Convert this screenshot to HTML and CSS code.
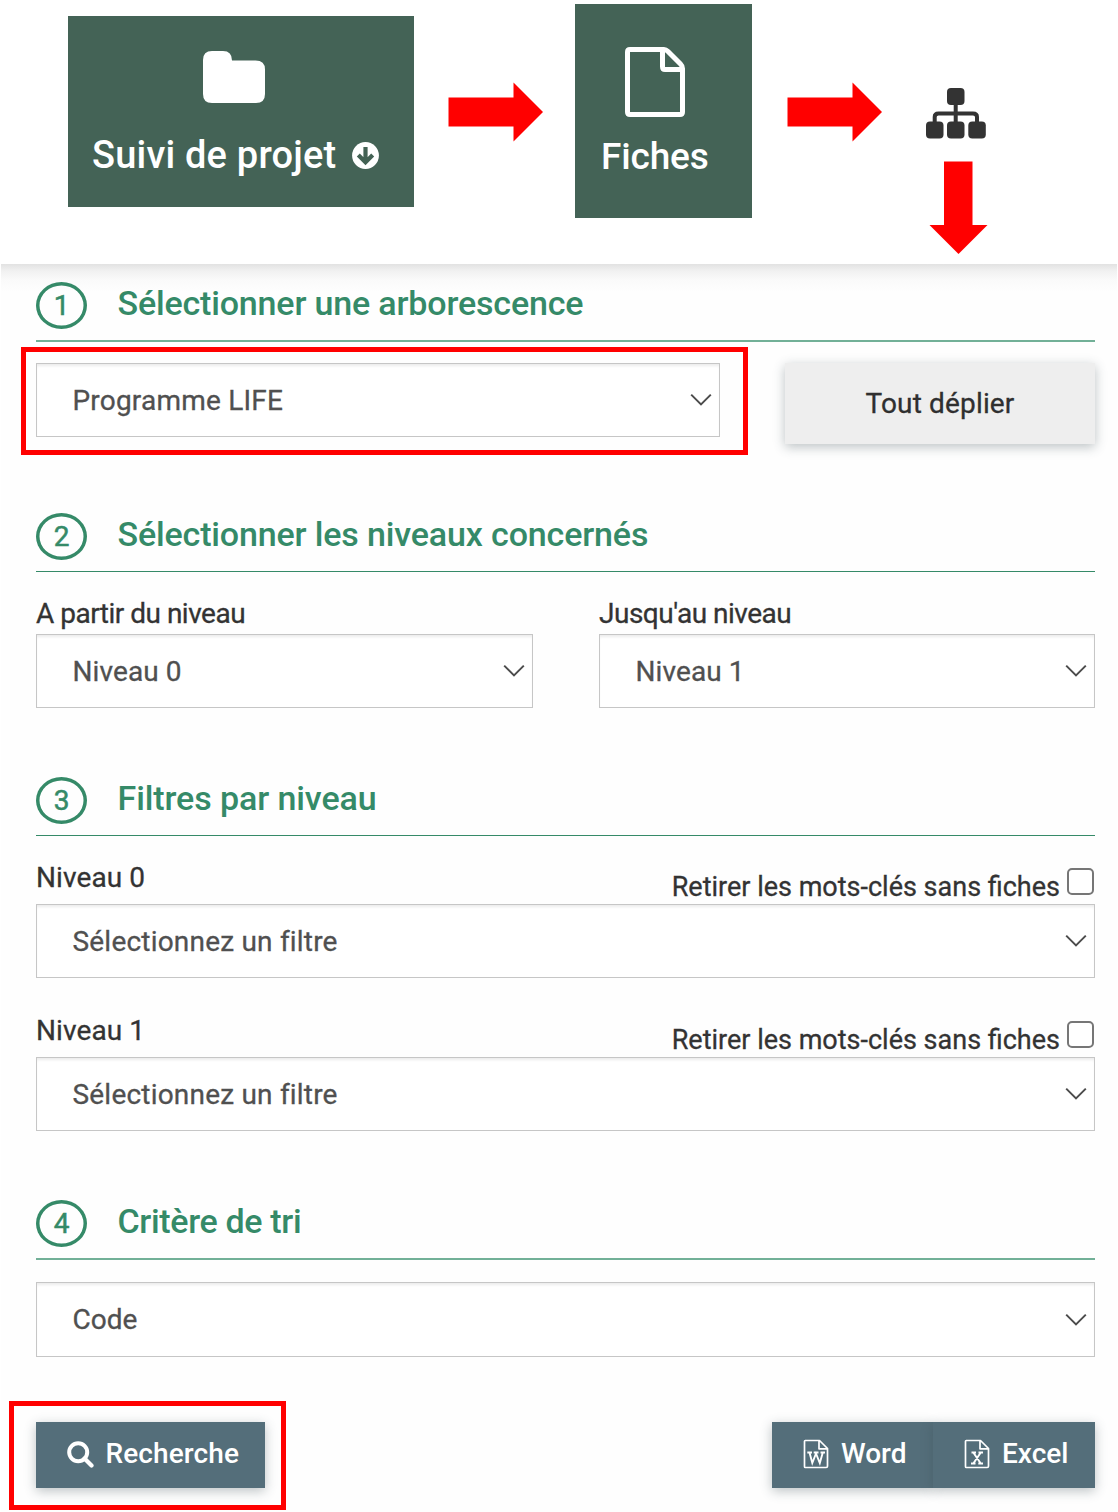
FILE: index.html
```
<!DOCTYPE html>
<html lang="fr">
<head>
<meta charset="utf-8">
<title>Suivi de projet – Fiches</title>
<link rel="stylesheet" href="styles.css">
</head>
<body>
<svg width="0" height="0" class="defs" aria-hidden="true">
  <symbol id="chevron" viewBox="0 0 22 14"><path d="M1.2 1.6 11 11.4 20.8 1.6" fill="none" stroke="#4c4c4c" stroke-width="2"/></symbol>
  <symbol id="arrow" viewBox="0 0 94 60"><path d="M0 15.500H65V0.500L94.500 30 65 59.500V44.500H0Z" fill="#f00"/></symbol>
  <symbol id="sheet" viewBox="0 0 26 30"><path d="M2 1.500H16.500L24.500 9.500V27.200Q24.500 28.500 23.200 28.500H2.200Q1.500 28.500 1.500 27.500V2.300Q1.500 1.500 2.300 1.500M16 1.500V9.800H24.500" fill="none" stroke="#fff" stroke-width="1.700" stroke-linejoin="round"/></symbol>
</svg>

<header class="path">
  <a class="tile tile-project">
    <svg class="folder" viewBox="0 0 62 52"><path d="M9 0H20Q29 0 29 9.500H52.500Q62 9.500 62 18.500V43Q62 52 53 52H9Q0 52 0 43V9Q0 0 9 0Z" fill="#fff"/></svg>
    <span class="tile-label"><span class="t-project">Suivi de projet</span>
      <svg class="down" viewBox="0 0 27 27"><circle cx="13.500" cy="13.500" r="13.400" fill="#fff"/><path d="M13.500 5V20M6.300 13 13.500 20.200 20.700 13" fill="none" stroke="#436254" stroke-width="4.200"/></svg>
    </span>
  </a>
  <svg class="arrow arrow-1"><use href="#arrow"/></svg>
  <a class="tile tile-sheets">
    <svg class="file" viewBox="0 0 60 70"><path d="M5 2.500H39Q41 2.500 43 4.500L55.500 17Q57.500 19 57.500 21.500V65Q57.500 67.500 55 67.500H5Q2.500 67.500 2.500 65V5Q2.500 2.500 5 2.500ZM37.500 3V19.500Q37.500 22.500 40 22.500H57" fill="none" stroke="#fff" stroke-width="5"/></svg>
    <span class="tile-label t-sheets">Fiches</span>
  </a>
  <svg class="arrow arrow-2"><use href="#arrow"/></svg>
  <div class="tree">
    <svg class="sitemap" viewBox="0 0 60 51"><g fill="#333"><rect x="21" y="0" width="17.500" height="17" rx="4"/><rect x="0" y="33.500" width="17.500" height="17" rx="4"/><rect x="21" y="33.500" width="17.500" height="17" rx="4"/><rect x="42.300" y="33.500" width="17.500" height="17" rx="4"/></g><path d="M29.700 15V36M8.700 36V29Q8.700 25.500 12.500 25.500H47Q51 25.500 51 29V36" fill="none" stroke="#333" stroke-width="4"/></svg>
    <svg class="arrow-down" viewBox="0 0 59 92"><path d="M15 0H43.500V63.500H58.500L29.500 92.500 0.500 63.500H15Z" fill="#f00"/></svg>
  </div>
</header>

<main class="panel">
  <section class="step step-1">
    <h2 class="head"><span class="num">1</span><span class="title t-h1">Sélectionner une arborescence</span></h2>
    <div class="row">
      <div class="select marked"><span class="t-life">Programme LIFE</span><svg class="chev"><use href="#chevron"/></svg></div>
      <button class="unfold"><span class="t-unfold">Tout déplier</span></button>
    </div>
  </section>

  <section class="step step-2">
    <h2 class="head thin"><span class="num">2</span><span class="title t-h2">Sélectionner les niveaux concernés</span></h2>
    <div class="cols">
      <div class="field"><label class="label"><span class="t-from">A partir du niveau</span></label>
        <div class="select"><span class="t-niv">Niveau 0</span><svg class="chev"><use href="#chevron"/></svg></div></div>
      <div class="field"><label class="label"><span class="t-to">Jusqu'au niveau</span></label>
        <div class="select"><span class="t-niv">Niveau 1</span><svg class="chev"><use href="#chevron"/></svg></div></div>
    </div>
  </section>

  <section class="step step-3">
    <h2 class="head thin"><span class="num">3</span><span class="title t-h3">Filtres par niveau</span></h2>
    <div class="filter">
      <div class="filter-head"><span class="t-niv">Niveau 0</span><label class="remove"><span class="t-remove">Retirer les mots-clés sans fiches</span><i class="box"></i></label></div>
      <div class="select"><span class="t-filter">Sélectionnez un filtre</span><svg class="chev"><use href="#chevron"/></svg></div>
    </div>
    <div class="filter">
      <div class="filter-head"><span class="t-niv">Niveau 1</span><label class="remove"><span class="t-remove">Retirer les mots-clés sans fiches</span><i class="box"></i></label></div>
      <div class="select"><span class="t-filter">Sélectionnez un filtre</span><svg class="chev"><use href="#chevron"/></svg></div>
    </div>
  </section>

  <section class="step step-4">
    <h2 class="head"><span class="num">4</span><span class="title t-h4">Critère de tri</span></h2>
    <div class="select select-sort"><span class="t-code">Code</span><svg class="chev"><use href="#chevron"/></svg></div>
  </section>

  <footer class="actions">
    <button class="btn search"><svg class="lens" viewBox="0 0 27 27"><circle cx="11.200" cy="11.200" r="9" fill="none" stroke="#fff" stroke-width="4"/><path d="M17.500 17.500 24.500 24.500" stroke="#fff" stroke-width="4.200" stroke-linecap="round"/></svg><span class="t-search">Recherche</span></button>
    <div class="exports">
      <button class="btn word"><svg class="doc" viewBox="0 0 26 30"><use href="#sheet"/><path d="M4.300 13.500H9M10.700 13.500H15.500M17.500 13.500H22M6.500 13.500 9.300 24 13 14.500 16.800 24 19.800 13.500" fill="none" stroke="#fff" stroke-width="1.900"/></svg><span class="t-word">Word</span></button>
      <button class="btn excel"><svg class="doc" viewBox="0 0 26 30"><use href="#sheet"/><path d="M7.500 13.500H12M14.500 13.500H19M7 24.500H11.500M14.300 24.500H19M9.300 13.500 16.800 24.500M16.800 13.500 9.300 24.500" fill="none" stroke="#fff" stroke-width="1.900"/></svg><span class="t-excel">Excel</span></button>
    </div>
  </footer>
</main>
</body>
</html>
```
FILE: styles.css
```
* { box-sizing: border-box; }
body { margin: 0; background: #fff; color: #333; font-family: Roboto, "Liberation Sans", sans-serif; font-size: 28px; line-height: 34px; }
span { white-space: nowrap; }
svg { display: block; flex: none; }
.defs { position: absolute; }

.path { display: flex; align-items: flex-start; height: 264px; padding-left: 67.5px; }
.tile { display: flex; flex-direction: column; align-items: center; background: #446356; color: #fff; font-weight: 500; font-size: 38px; line-height: 46px; }
.tile-project { width: 346px; height: 191px; margin-top: 16px; padding-top: 35px; }
.tile-sheets { width: 177px; height: 214px; margin: 4px 0 0 32px; padding-top: 43px; }
.tile-label { display: flex; align-items: center; }
.tile-project .tile-label { width: 346px; padding-left: 24.5px; margin-top: 29px; gap: 16px; }
.t-project { letter-spacing: 0.2px; }
.t-sheets { margin-top: 17px; width: 177px; padding-left: 26px; font-size: 37px; letter-spacing: -0.15px; }
.folder { width: 62px; height: 52px; margin-left: -13px; }
.down { width: 27px; height: 27px; }
.file { width: 60px; height: 70px; margin-left: -18px; }
.arrow { width: 95px; height: 60px; margin-top: 82px; }
.arrow-1 { margin-left: 34.5px; }
.arrow-2 { margin-left: 34.5px; }
.tree { display: flex; flex-direction: column; width: 63px; margin: 88px 0 0 44px; }
.sitemap { width: 60px; height: 51px; }
.arrow-down { width: 59px; height: 93px; margin: 22px 0 0 3px; }

.panel { margin: 0 1px; padding: 18px 22px 0 35px; height: 1248px; background: linear-gradient(#e2e2e2, #f1f1f1 7px, #fafafa 16px, #fefefe 28px); }
.head { display: flex; align-items: flex-start; height: 60px; margin: 0; border-bottom: 2px solid #72b097; color: #358a68; font-size: 34px; line-height: 42px; font-weight: 500; }
.head.thin { height: 59px; border-bottom: 1px solid #358a68; }
.num { display: flex; align-items: center; justify-content: center; width: 51px; height: 47px; box-shadow: inset 0 0 0 3.5px #358a68; border-radius: 50%; font-size: 28px; font-weight: 400; -webkit-text-stroke: 0.5px; }
.title { margin-left: 30.5px; }
.t-h1 { letter-spacing: -0.17px; }
.t-h2 { letter-spacing: -0.15px; }
.t-h3 { letter-spacing: -0.1px; }
.t-h4 { letter-spacing: -0.35px; }
.t-from, .t-to { letter-spacing: -0.5px; }

.step-1 { height: 231px; }
.step-2 { height: 264px; }
.step-3 { height: 423px; }
.step-4 { height: 157px; }
.row { display: flex; justify-content: space-between; align-items: flex-start; margin-top: 21px; }
.select { display: flex; align-items: center; justify-content: space-between; height: 74px; padding: 0 7.5px 0 35.5px; border: 1px solid #c6c6c6; background: #fff; box-shadow: inset 0 3px 3px -1px #00000014; color: #505050; font-weight: 400; -webkit-text-stroke: 0.3px; }
.cols .select { padding-top: 2px; }
.cols .chev { margin-top: -2px; }
.chev { width: 22px; height: 14px; }
.marked { position: relative; width: 684px; padding-top: 2px; }
.marked .chev { margin-top: -2px; }
.marked::after { content: ""; position: absolute; inset: -17px -29px -19px -16px; border: 5px solid #f00; }
.t-life { letter-spacing: 0.2px; }
.t-filter { letter-spacing: 0.2px; }
.t-niv { letter-spacing: 0.1px; }
.filter .select { padding-top: 2px; }
.filter .chev { margin-top: -2px; }
button { border: 0; font: inherit; color: inherit; padding: 0; }
.unfold { width: 310px; height: 81px; background: #eee; color: #2f2f2f; box-shadow: 0 3px 11px #37474f55; -webkit-text-stroke: 0.3px; }
.t-unfold { letter-spacing: 0.15px; }
.cols { display: flex; justify-content: space-between; margin-top: 25px; }
.field:first-child { width: 497px; }
.field:last-child { width: 496px; }
.label { display: block; height: 37px; -webkit-text-stroke: 0.3px; }

.filter { margin-top: 25px; }
.filter + .filter { margin-top: 36px; }
.filter-head { display: flex; justify-content: space-between; height: 43px; -webkit-text-stroke: 0.3px; }
.filter .select { height: 74px; }
.filter-head + .select { margin-top: 0; }
.remove { display: flex; align-items: flex-start; gap: 7px; padding-right: 1px; }
.t-remove { margin-top: 9px; font-size: 27px; }
.box { width: 27px; height: 27px; margin-top: 7px; border: 2px solid #767676; border-radius: 5px; background: #fff; }
.select-sort { height: 75px; margin-top: 22px; }

.actions { display: flex; justify-content: space-between; margin-top: 65px; }
.btn { display: flex; align-items: center; height: 66px; padding-bottom: 2px; background: #546e7a; color: #fff; font-weight: 500; box-shadow: 0 3px 11px #37474f55; }
.search { position: relative; width: 229px; padding-left: 31px; }
.search::after { content: ""; position: absolute; inset: -21px -21px -22px -27px; border: 5px solid #f00; }
.lens { width: 27px; height: 27px; margin-right: 11.5px; }
.t-search { letter-spacing: 0.1px; }
.exports { display: flex; }
.doc { width: 26px; height: 30px; margin-right: 12px; }
.word { width: 161px; padding-left: 31px; }
.excel { width: 162px; padding-left: 31px; }
```
